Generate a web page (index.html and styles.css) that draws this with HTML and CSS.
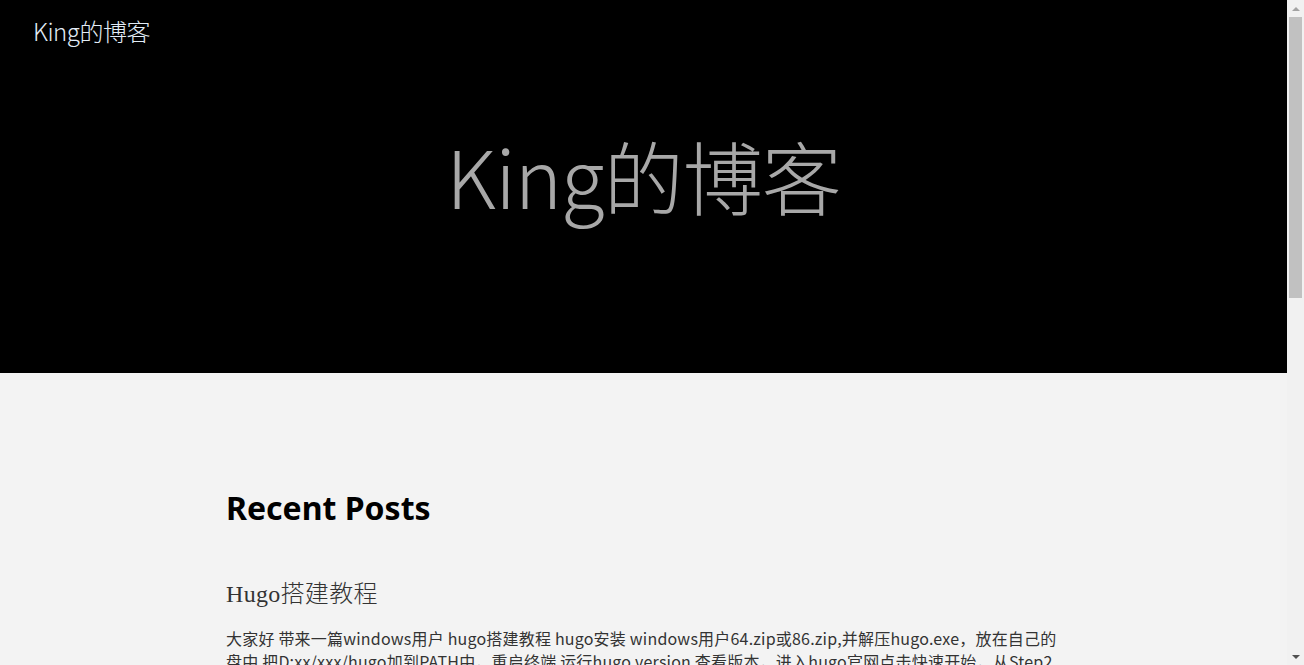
FILE: index.html
```html
<!DOCTYPE html>
<html lang="zh-CN">
<head>
<meta charset="utf-8">
<title>King的博客</title>
<link rel="stylesheet" href="styles.css">
</head>
<body>
<div class="page">
  <header class="hero">
    <nav class="nav">
      <a class="nav-brand" href="#">King的博客</a>
    </nav>
    <div class="hero-body">
      <h1 class="hero-title">King的博客</h1>
    </div>
  </header>
  <main class="content">
    <h2 class="section-title">Recent Posts</h2>
    <article class="post">
      <h3 class="post-title"><a href="#">Hugo搭建教程</a></h3>
      <p class="post-summary">大家好 带来一篇windows用户 hugo搭建教程 hugo安装 windows用户64.zip或86.zip,并解压hugo.exe，放在自己的盘中 把D:xx/xxx/hugo加到PATH中，重启终端 运行hugo version 查看版本，进入hugo官网点击快速开始，从Step2 开始 创建一个新站点 hugo new site quickstart 添加主题 进入主题页面挑选一个自己喜欢的主题 按照主题的说明进行配置 ……</p>
      <a class="read-more" href="#">阅读更多</a>
    </article>
    <article class="post">
      <h3 class="post-title"><a href="#">我的第一篇博客</a></h3>
      <p class="post-summary">这是我的第一篇博客，记录一下使用 Hugo 搭建个人博客的过程。</p>
      <a class="read-more" href="#">阅读更多</a>
    </article>
  </main>
  <footer class="footer">© King的博客</footer>
</div>
<div class="scrollbar" aria-hidden="true">
  <span class="sb-arrow sb-up"></span>
  <div class="sb-track"><div class="sb-thumb"></div></div>
  <span class="sb-arrow sb-down"></span>
</div>
</body>
</html>
```
FILE: styles.css
```css
html, body {
  margin: 0;
  padding: 0;
}
body {
  background: #f3f3f3;
  color: #333;
  font-family: "Open Sans", "Noto Sans CJK SC", sans-serif;
  font-size: 16px;
}
a {
  color: inherit;
  text-decoration: none;
}
.page {
  margin-right: 17px;
}
.hero {
  background: #000;
  height: 373px;
  display: flex;
  flex-direction: column;
}
.nav {
  display: flex;
  align-items: center;
  height: 60px;
  padding: 0 33px;
}
.nav-brand {
  color: #e2ecf6;
  font-size: 24px;
  font-weight: 300;
  font-family: "Noto Sans CJK SC", sans-serif;
  letter-spacing: -0.5px;
}
.hero-body {
  flex: 1;
  display: flex;
  align-items: flex-start;
  justify-content: center;
}
.hero-title {
  margin: 66px 0 0;
  color: #a8a8a8;
  font-size: 80px;
  font-weight: 300;
  font-family: "Noto Sans CJK SC", sans-serif;
  line-height: 1.2;
  letter-spacing: -1px;
}
.content {
  max-width: 835px;
  margin: 0 auto;
  padding: 116px 0 60px;
}
.section-title {
  margin: 0 0 52px;
  font-size: 32px;
  font-weight: 700;
  color: #000;
  font-family: "Noto Sans", "Noto Sans CJK SC", sans-serif;
  line-height: 1.2;
}
.post {
  margin-bottom: 40px;
}
.post-title {
  margin: 0 0 16px;
  font-family: "Liberation Serif", "Noto Sans CJK SC", serif;
  font-weight: 300;
  font-size: 24px;
  color: #333;
  line-height: 1.3;
  letter-spacing: 0.3px;
}
.post-summary {
  margin: 0 0 12px;
  line-height: 23px;
  font-family: "Noto Sans CJK SC", sans-serif;
  font-weight: 400;
  letter-spacing: 0.2px;
}
.read-more {
  color: #555;
  font-size: 14px;
}
.footer {
  text-align: center;
  padding: 30px 0;
  color: #777;
  font-size: 14px;
}
/* browser scrollbar overlay */
.scrollbar {
  position: fixed;
  top: 0;
  right: 0;
  width: 17px;
  height: 100vh;
  background: #f1f1f1;
  display: flex;
  flex-direction: column;
  align-items: center;
}
.sb-arrow {
  flex: none;
  height: 17px;
  width: 17px;
  display: flex;
  align-items: center;
  justify-content: center;
}
.sb-arrow::before {
  content: "";
  width: 0;
  height: 0;
  border-left: 4px solid transparent;
  border-right: 4px solid transparent;
}
.sb-up::before {
  border-bottom: 4px solid #a3a3a3;
}
.sb-down::before {
  border-top: 4px solid #505050;
}
.sb-track {
  flex: 1;
  width: 100%;
  display: flex;
  justify-content: center;
}
.sb-thumb {
  width: 13px;
  height: 281px;
  background: #c1c1c1;
}
```
